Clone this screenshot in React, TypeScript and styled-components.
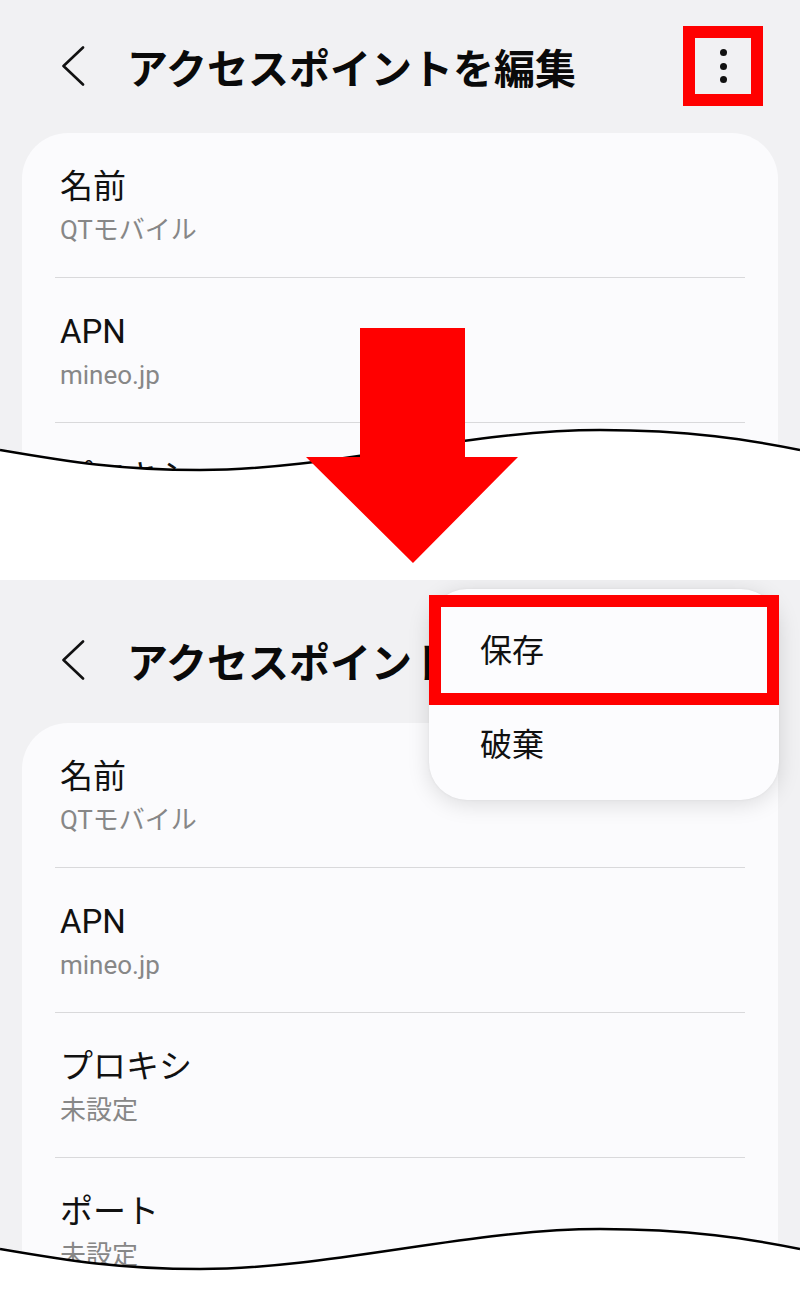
import React from "react";
import styled, { createGlobalStyle } from "styled-components";

const GlobalStyle = createGlobalStyle`
  html, body { margin: 0; padding: 0; background: #ffffff; }
  body { font-family: Roboto, "Noto Sans CJK JP", sans-serif; color: #111111; }
  * { box-sizing: border-box; }
`;

const Page = styled.div`
  position: relative;
  width: 800px;
  height: 1300px;
  overflow: hidden;
  background: #ffffff;
  display: flex;
  flex-direction: column;
`;

const Panel = styled.section<{ $h: number }>`
  position: relative;
  flex: none;
  height: ${(p) => p.$h}px;
  background: #f1f1f3;
  overflow: hidden;
`;

const Gap = styled.div<{ $h: number }>`
  flex: none;
  height: ${(p) => p.$h}px;
  background: #ffffff;
`;

const Screen = styled.div<{ $top: number }>`
  display: flex;
  flex-direction: column;
  padding-top: ${(p) => p.$top}px;
`;

const Header = styled.header`
  display: flex;
  align-items: center;
  height: 60px;
  padding: 0 37px 0 61px;
`;

const BackIcon = styled.svg`
  flex: none;
  width: 24px;
  height: 40px;
`;

const Title = styled.h1`
  flex: 1;
  margin: 0 0 0 42px;
  font-family: "Noto Sans CJK JP", sans-serif;
  font-weight: 700;
  font-size: 41px;
  line-height: 60px;
  white-space: nowrap;
  color: #0a0a0a;
`;

const Kebab = styled.div<{ $marked?: boolean }>`
  flex: none;
  width: 80px;
  height: 80px;
  display: flex;
  flex-direction: column;
  align-items: center;
  justify-content: center;
  gap: 6.5px;
  border: 12px solid ${(p) => (p.$marked ? "#ff0000" : "transparent")};
`;

const Dot = styled.span`
  width: 7px;
  height: 7px;
  border-radius: 50%;
  background: #111111;
`;

const Card = styled.div<{ $gap: number }>`
  margin: ${(p) => p.$gap}px 22px 0;
  padding: 0 33px;
  background: #fbfbfd;
  border-radius: 46px 46px 0 0;
  display: flex;
  flex-direction: column;
`;

const Item = styled.div`
  padding: 34px 5px 30px;
  border-bottom: 1px solid #d9d9db;
  display: flex;
  flex-direction: column;
  gap: 6px;
`;

const ItemTitle = styled.div`
  font-size: 33px;
  line-height: 40px;
  color: #111111;
`;

const ItemValue = styled.div`
  font-size: 26px;
  line-height: 34px;
  color: #878787;
`;

const WaveBox = styled.svg<{ $top: number; $h: number }>`
  position: absolute;
  left: 0;
  top: ${(p) => p.$top}px;
  width: 800px;
  height: ${(p) => p.$h}px;
  z-index: 2;
`;

const Arrow = styled.svg`
  position: absolute;
  left: 306px;
  top: 328px;
  width: 212px;
  height: 236px;
  z-index: 5;
`;

const Menu = styled.div`
  position: absolute;
  top: 9px;
  left: 429px;
  width: 350px;
  padding: 12px 0 11px;
  background: #fcfcfe;
  border-radius: 38px;
  box-shadow: 0 4px 22px rgba(0, 0, 0, 0.13), 0 0 3px rgba(0, 0, 0, 0.05);
  z-index: 3;
`;

const MenuItem = styled.div`
  height: 94px;
  display: flex;
  align-items: center;
  padding-left: 51px;
  font-family: "Noto Sans CJK JP", sans-serif;
  font-size: 32px;
  color: #111111;
`;

const Highlight = styled.div`
  position: absolute;
  top: 6px;
  left: 0;
  right: 0;
  height: 110px;
  border: 12px solid #ff0000;
  pointer-events: none;
`;

const curve = "M0,30 C70,42 120,50 200,50 C330,50 470,10 600,10 C690,10 750,20 800,30";

function Wave({ top, h }: { top: number; h: number }) {
  return (
    <WaveBox $top={top} $h={h} viewBox={`0 0 800 ${h}`} preserveAspectRatio="none">
      <path d={`${curve} L800,${h} L0,${h} Z`} fill="#ffffff" />
      <path d={curve} fill="none" stroke="#000000" strokeWidth={2.5} />
    </WaveBox>
  );
}

const items = [
  { title: "名前", value: "QTモバイル" },
  { title: "APN", value: "mineo.jp" },
  { title: "プロキシ", value: "未設定" },
  { title: "ポート", value: "未設定" },
  { title: "ユーザー名", value: "未設定" },
];

function EditScreen({ top, gap, marked }: { top: number; gap: number; marked?: boolean }) {
  return (
    <Screen $top={top}>
      <Header>
        <BackIcon viewBox="0 0 24 40">
          <path d="M22,1.5 L2.5,20 L22,38.5" fill="none" stroke="#111" strokeWidth={2.6} strokeLinecap="round" strokeLinejoin="round" />
        </BackIcon>
        <Title>アクセスポイントを編集</Title>
        <Kebab $marked={marked}>
          <Dot />
          <Dot />
          <Dot />
        </Kebab>
      </Header>
      <Card $gap={gap}>
        {items.map((it) => (
          <Item key={it.title}>
            <ItemTitle>{it.title}</ItemTitle>
            <ItemValue>{it.value}</ItemValue>
          </Item>
        ))}
      </Card>
    </Screen>
  );
}

export default function App() {
  return (
    <>
      <GlobalStyle />
      <Page>
        <Panel $h={480}>
          <EditScreen top={36} gap={37} marked />
          <Wave top={420} h={60} />
        </Panel>
        <Gap $h={100} />
        <Panel $h={720}>
          <EditScreen top={50} gap={33} />
          <Menu>
            <MenuItem>保存</MenuItem>
            <MenuItem>破棄</MenuItem>
            <Highlight />
          </Menu>
          <Wave top={639} h={81} />
        </Panel>
        <Arrow viewBox="0 0 212 236">
          <polygon points="54,0 159,0 159,129 212,129 107,235 0,129 54,129" fill="#ff0000" />
        </Arrow>
      </Page>
    </>
  );
}
